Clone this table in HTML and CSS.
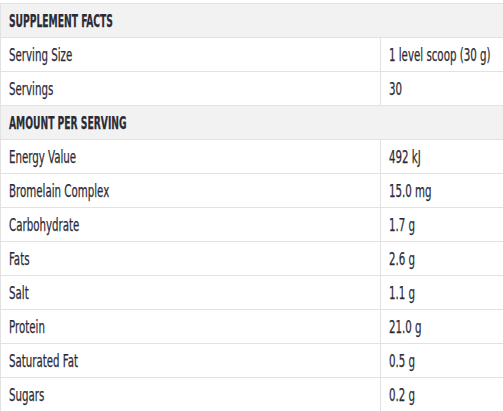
FILE: index.html
```html
<!DOCTYPE html>
<html>
<head>
<meta charset="utf-8">
<link rel="stylesheet" href="styles.css">
</head>
<body>
<table class="facts">
  <colgroup><col class="c-name"><col class="c-value"></colgroup>
  <tr class="head"><td colspan="2"><span class="t">SUPPLEMENT FACTS</span></td></tr>
  <tr><td><span class="t">Serving Size</span></td><td><span class="t">1 level scoop (30 g)</span></td></tr>
  <tr><td><span class="t">Servings</span></td><td><span class="t">30</span></td></tr>
  <tr class="head"><td colspan="2"><span class="t">AMOUNT PER SERVING</span></td></tr>
  <tr><td><span class="t">Energy Value</span></td><td><span class="t">492 kJ</span></td></tr>
  <tr><td><span class="t">Bromelain Complex</span></td><td><span class="t">15.0 mg</span></td></tr>
  <tr><td><span class="t">Carbohydrate</span></td><td><span class="t">1.7 g</span></td></tr>
  <tr><td><span class="t">Fats</span></td><td><span class="t">2.6 g</span></td></tr>
  <tr><td><span class="t">Salt</span></td><td><span class="t">1.1 g</span></td></tr>
  <tr><td><span class="t">Protein</span></td><td><span class="t">21.0 g</span></td></tr>
  <tr><td><span class="t">Saturated Fat</span></td><td><span class="t">0.5 g</span></td></tr>
  <tr><td><span class="t">Sugars</span></td><td><span class="t">0.2 g</span></td></tr>
</table>
</body>
</html>
```
FILE: styles.css
```css
html, body {
  margin: 0;
  padding: 0;
  background: #fff;
  overflow: hidden;
}
body {
  padding-top: 3px;
}
.facts {
  border-collapse: collapse;
  table-layout: fixed;
  width: 100%;
  font-family: "DejaVu Sans Condensed", "DejaVu Sans", sans-serif;
  font-stretch: condensed;
  font-size: 17px;
  color: #2b2b36;
  white-space: nowrap;
}
.c-name {
  width: 380px;
}
.facts td {
  border: 1px solid #e2e2e2;
  height: 34px;
  padding: 0 0 0 8px;
  box-sizing: border-box;
  vertical-align: middle;
  overflow: hidden;
}
.facts td:last-child {
  border-right: none;
}
.t {
  display: inline-block;
  transform: scaleX(0.67);
  transform-origin: left center;
  -webkit-text-stroke: 0.25px #2b2b36;
}
.facts tr.head td {
  background: #f2f2f2;
  font-weight: bold;
}
.facts tr.head .t {
  transform: scaleX(0.6);
}
```
